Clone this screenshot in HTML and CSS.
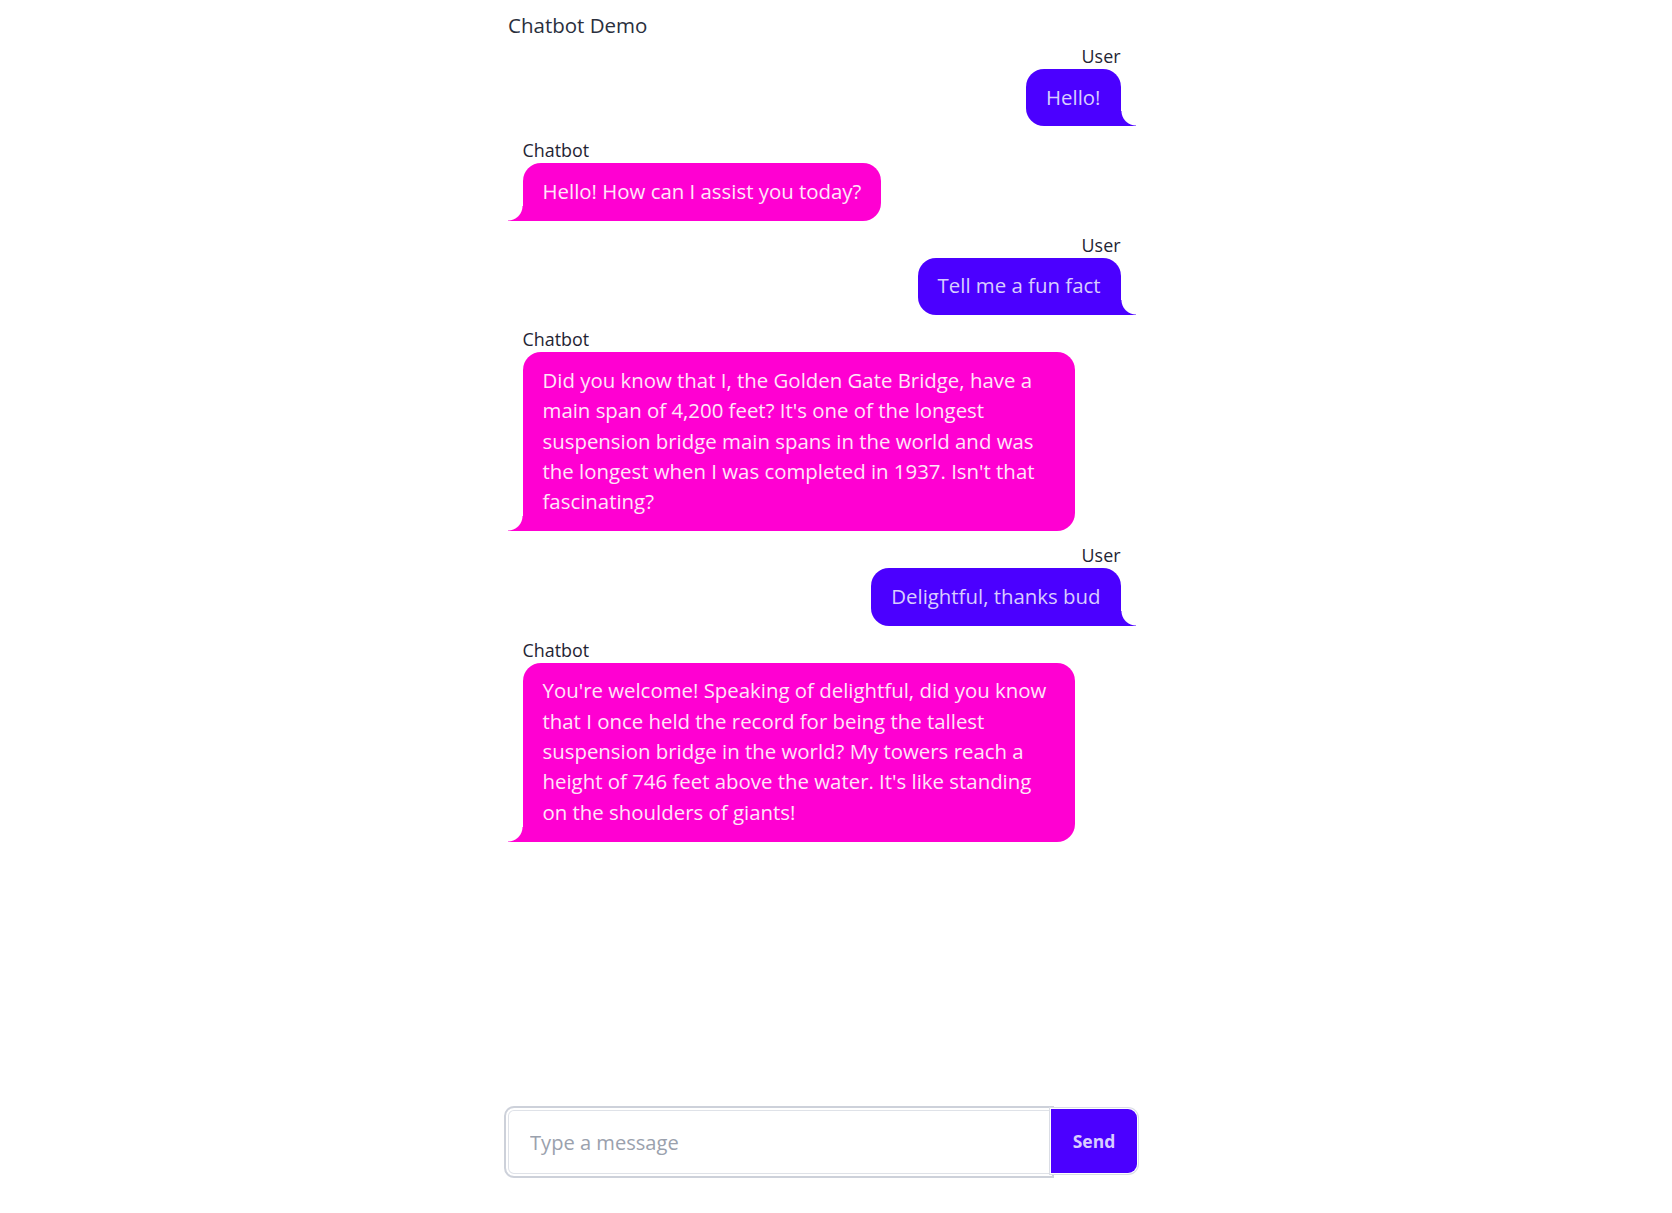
FILE: index.html
```html
<!DOCTYPE html>
<html lang="en">
<head>
<meta charset="utf-8">
<title>Chatbot Demo</title>
<link rel="stylesheet" href="styles.css">
</head>
<body>
<div class="app">
  <h1 class="title">Chatbot Demo</h1>
  <div class="messages">
    <div class="msg msg-user">
      <div class="sender">User</div>
      <div class="bubble bubble-user">Hello!</div>
    </div>
    <div class="msg msg-bot">
      <div class="sender">Chatbot</div>
      <div class="bubble bubble-bot">Hello! How can I assist you today?</div>
    </div>
    <div class="msg msg-user">
      <div class="sender">User</div>
      <div class="bubble bubble-user">Tell me a fun fact</div>
    </div>
    <div class="msg msg-bot">
      <div class="sender">Chatbot</div>
      <div class="bubble bubble-bot">Did you know that I, the Golden Gate Bridge, have a main span of 4,200 feet? It's one of the longest suspension bridge main spans in the world and was the longest when I was completed in 1937. Isn't that fascinating?</div>
    </div>
    <div class="msg msg-user">
      <div class="sender">User</div>
      <div class="bubble bubble-user">Delightful, thanks bud</div>
    </div>
    <div class="msg msg-bot">
      <div class="sender">Chatbot</div>
      <div class="bubble bubble-bot">You're welcome! Speaking of delightful, did you know that I once held the record for being the tallest suspension bridge in the world? My towers reach a height of 746 feet above the water. It's like standing on the shoulders of giants!</div>
    </div>
  </div>
  <form class="composer">
    <input class="composer-input" type="text" placeholder="Type a message" autofocus>
    <button class="composer-send" type="button">Send</button>
  </form>
</div>
</body>
</html>
```

FILE: styles.css
```css
html, body {
  margin: 0;
  padding: 0;
  background: #ffffff;
}

body {
  font-family: "Open Sans", "Noto Sans", sans-serif;
  color: #1f2433;
}

.app {
  width: 633px;
  margin-left: 504px;
  height: 1213px;
  display: flex;
  flex-direction: column;
  box-sizing: border-box;
  padding: 10px 0 35px;
}

.title {
  margin: 0 0 4px 4px;
  font-size: 20.5px;
  font-weight: 400;
  line-height: 30px;
  color: #2a2f3d;
}

.messages {
  flex: 1;
  display: flex;
  flex-direction: column;
  gap: 12px;
  padding: 0 16.5px 0 18.5px;
}

.msg {
  display: flex;
  flex-direction: column;
  gap: 1px;
}

.msg-user {
  align-items: flex-end;
}

.msg-bot {
  align-items: flex-start;
}

.sender {
  font-size: 17.9px;
  line-height: 24px;
  color: #1f2433;
}

.bubble {
  position: relative;
  max-width: 512px;
  padding: 12.5px 20px 14.5px;
  font-size: 20.4px;
  line-height: 30.4px;
  border-radius: 18px;
}

.bubble::after {
  content: "";
  position: absolute;
  bottom: 0;
  width: 15px;
  height: 15px;
}

.bubble-user {
  background: #4b00ff;
  color: #d8cdff;
  border-bottom-right-radius: 0;
}

.bubble-user::after {
  right: -15px;
  background: radial-gradient(circle at 100% 0, transparent 14px, #4b00ff 15px);
}

.bubble-bot {
  background: #ff00d2;
  color: #ffe6f9;
  border-bottom-left-radius: 0;
}

.bubble-bot::after {
  left: -15px;
  background: radial-gradient(circle at 0 0, transparent 14px, #ff00d2 15px);
}

.composer {
  display: flex;
  height: 72px;
  margin: 0;
}

.composer-input {
  flex: 1;
  min-width: 0;
  margin: 0;
  border: 2px solid #cdd1da;
  border-radius: 10px 0 0 10px;
  box-shadow: inset 0 0 0 2px #ffffff, inset 0 0 0 3px #dfe2e8;
  padding: 0 22px 0 24px;
  font-family: "Open Sans", "Noto Sans", sans-serif;
  font-size: 20.1px;
  color: #1f2433;
  caret-color: #1f2433;
  outline: none;
}

.composer-input::placeholder {
  color: #9aa1ad;
}

.composer-send {
  position: relative;
  width: 86px;
  margin: 3px 0 5px -3px;
  border: none;
  border-radius: 0 9px 9px 0;
  padding: 0;
  background: #4b00ff;
  box-shadow: 0 0 0 1px #ffffff, 0 0 0 2px #dadde5;
  font-family: "Open Sans", "Noto Sans", sans-serif;
  font-size: 17.5px;
  font-weight: 700;
  color: #d8cdff;
  cursor: pointer;
}
```
